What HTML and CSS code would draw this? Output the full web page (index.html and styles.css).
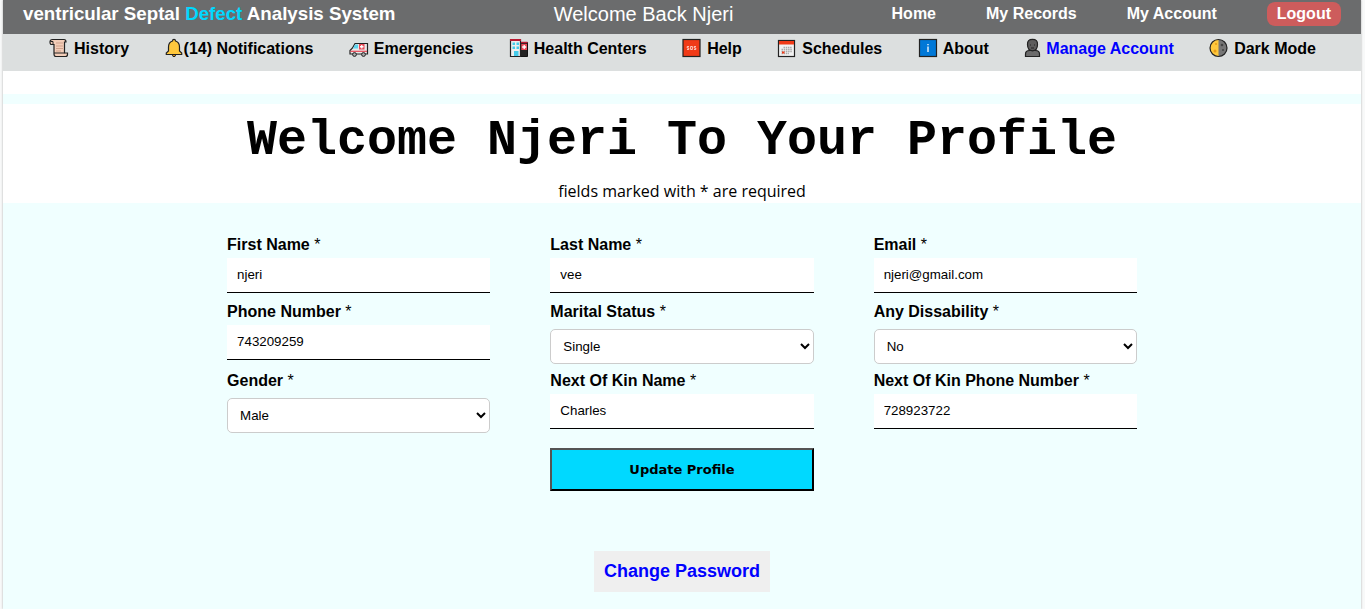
FILE: index.html
```html
<!DOCTYPE html>
<html lang="en">
<head>
<meta charset="utf-8">
<meta name="viewport" content="width=device-width, initial-scale=1">
<title>Manage Account</title>
<link rel="stylesheet" href="styles.css">
</head>
<body>
<div class="page">
  <header class="topbar">
    <h3 class="brand">ventricular Septal <span class="brand-accent">Defect</span> Analysis System</h3>
    <div class="greeting">Welcome Back Njeri</div>
    <nav class="top-links">
      <a href="#">Home</a>
      <a href="#">My Records</a>
      <a href="#">My Account</a>
      <a href="#" class="logout">Logout</a>
    </nav>
  </header>

  <nav class="menu">
    <a href="#" class="menu-item">
      <svg class="icon" viewBox="0 0 20 20"><path d="M4.500 1.500H15Q17 1.500 17 4H15.500V15H18.500V16.500Q18.500 18.500 16.500 18.500H7Q5 18.500 5 16V6.500H2.500Q1 6.500 1 4Q1 1.500 3.500 1.500Z" fill="#f3cdb8" stroke="#222" stroke-width="1.200"/><path d="M1.500 3.500H4V6.500M5 15H15.500" stroke="#222" fill="none"/><path d="M7 5H14M7 8H14M7 10.500H14M7 13H12" stroke="#cfa18c"/></svg>
      <span>History</span>
    </a>
    <a href="#" class="menu-item menu-item-tight">
      <svg class="icon" viewBox="0 0 18 20"><path d="M7.500 16H10.500V17Q10.500 18.700 9 18.700T7.500 17Z" fill="#e79b16" stroke="#222"/><path d="M9 1.400Q10.500 1.400 10.500 3Q14.500 4.200 14.500 9V13L16.700 15V16.500H1.300V15L3.500 13V9Q3.500 4.200 7.500 3Q7.500 1.400 9 1.400Z" fill="#ffc83d" stroke="#222" stroke-width="1.200"/></svg>
      <span>(14) Notifications</span>
    </a>
    <a href="#" class="menu-item">
      <svg class="icon" viewBox="0 0 20 20"><path d="M6 5.500H18.500V16H1V12.500L3.500 10Z" fill="#e8e8e8" stroke="#222" stroke-width="1.200"/><path d="M6 6.500H9V10.500H4Z" fill="#5fd4ef"/><path d="M10 6H15.500V11.500H10Z" fill="#e94856"/><path d="M12.750 7V10.500M11 8.750H14.500" stroke="#fff" stroke-width="1.300"/><path d="M1.500 13.300H18" stroke="#e94856" stroke-width="1.200"/><circle cx="5.500" cy="16.500" r="1.900" fill="#aaa" stroke="#222"/><circle cx="14.500" cy="16.500" r="1.900" fill="#aaa" stroke="#222"/></svg>
      <span>Emergencies</span>
    </a>
    <a href="#" class="menu-item">
      <svg class="icon" viewBox="0 0 20 20"><path d="M11.500 4.500H18.500V18.500H11.500Z" fill="#222" stroke="#111"/><path d="M1.500 1.500H11.500V18.500H1.500Z" fill="#eee" stroke="#222" stroke-width="1.200"/><path d="M1 2H12" stroke="#b81830" stroke-width="2"/><path d="M12 4.500H18.500" stroke="#b81830" stroke-width="1.500"/><path d="M3.500 4.500H6V7H3.500ZM7.500 4.500H10V7H7.500ZM3.500 8.500H6V11H3.500ZM7.500 8.500H10V11H7.500ZM5 13H9.500V18H5Z" fill="#45cbea"/><path d="M12.300 6H18V12H12.300Z" fill="#e94856"/><path d="M15.200 7V11M13.200 9H17.200" stroke="#fff" stroke-width="1.300"/></svg>
      <span>Health Centers</span>
    </a>
    <a href="#" class="menu-item">
      <svg class="icon" viewBox="0 0 20 20"><rect x="1" y="1.500" width="17" height="17" fill="#f03a17" stroke="#222" stroke-width="1.200"/><path d="M7 8.500H5.200V10H6.800V11.500H5M8.600 8.500H10.400V11.500H8.600ZM14 8.500H12.200V10H13.800V11.500H12" fill="none" stroke="#fff" stroke-width=".7"/></svg>
      <span>Help</span>
    </a>
    <a href="#" class="menu-item">
      <svg class="icon" viewBox="0 0 20 20"><rect x="1.500" y="2.500" width="16" height="16" fill="#f2f2f2" stroke="#222" stroke-width="1.200"/><path d="M2 3H17V6.500H2Z" fill="#f03a17"/><path d="M6.500 9.500H15M4.500 11.500H15M4.500 13.500H15M4.500 15.500H12" stroke="#aaa" stroke-width="1.300" stroke-dasharray="1.500 .7"/><path d="M5 13.500H7.500V15.500H5Z" fill="#f03a17"/></svg>
      <span>Schedules</span>
    </a>
    <a href="#" class="menu-item">
      <svg class="icon" viewBox="0 0 20 20"><rect x="1.500" y="1.500" width="17" height="17" fill="#0078d7" stroke="#222" stroke-width="1.200"/><path d="M10 6V7.300M10 8.500V14" stroke="#fff" stroke-width="1.300"/></svg>
      <span>About</span>
    </a>
    <a href="#" class="menu-item menu-item-active">
      <svg class="icon" viewBox="0 0 18 20"><path d="M1.500 18.500V16Q1.500 12.500 5.500 12.500H11.500Q15.500 12.500 15.500 16V18.500Z" fill="#6b6b6b" stroke="#222" stroke-width="1.200"/><path d="M8.500 1.400Q13.800 1.400 13.500 6.500Q13.500 12.500 8.500 12.800Q3.500 12.500 3.500 6.500Q3.200 1.400 8.500 1.400Z" fill="#5d5d5d" stroke="#222" stroke-width="1.200"/><path d="M6 7H7M10 7H11M7 10H10" stroke="#222"/></svg>
      <span>Manage Account</span>
    </a>
    <a href="#" class="menu-item">
      <svg class="icon" viewBox="0 0 20 20"><circle cx="9.500" cy="10" r="8.500" fill="#767676"/><path d="M9.500 1.500A8.500 8.500 0 0 0 9.500 18.500Z" fill="#ffc83d"/><circle cx="6" cy="13" r="1.500" fill="#e79b16"/><circle cx="7" cy="6" r="1" fill="#e79b16"/><circle cx="13" cy="7" r="1.300" fill="#444"/><circle cx="14" cy="12" r="1" fill="#444"/><circle cx="9.500" cy="10" r="8.500" fill="none" stroke="#222" stroke-width="1.200"/></svg>
      <span>Dark Mode</span>
    </a>
  </nav>

  <main class="content">
    <section class="intro">
      <h1 class="title">Welcome Njeri To Your Profile</h1>
      <p class="note">fields marked with * are required</p>
    </section>

    <form class="profile-form">
      <div class="field">
        <label for="first-name">First Name <span class="star">*</span></label>
        <input id="first-name" type="text" value="njeri">
      </div>
      <div class="field">
        <label for="last-name">Last Name <span class="star">*</span></label>
        <input id="last-name" type="text" value="vee">
      </div>
      <div class="field">
        <label for="email">Email <span class="star">*</span></label>
        <input id="email" type="email" value="njeri@gmail.com">
      </div>
      <div class="field">
        <label for="phone">Phone Number <span class="star">*</span></label>
        <input id="phone" type="text" value="743209259">
      </div>
      <div class="field">
        <label for="marital">Marital Status <span class="star">*</span></label>
        <select id="marital"><option>Single</option><option>Married</option></select>
      </div>
      <div class="field">
        <label for="disability">Any Dissability <span class="star">*</span></label>
        <select id="disability"><option>No</option><option>Yes</option></select>
      </div>
      <div class="field">
        <label for="gender">Gender <span class="star">*</span></label>
        <select id="gender"><option>Male</option><option>Female</option></select>
      </div>
      <div class="field">
        <label for="kin-name">Next Of Kin Name <span class="star">*</span></label>
        <input id="kin-name" type="text" value="Charles">
      </div>
      <div class="field">
        <label for="kin-phone">Next Of Kin Phone Number <span class="star">*</span></label>
        <input id="kin-phone" type="text" value="728923722">
      </div>
      <button type="submit" class="update">Update Profile</button>
    </form>

    <a href="#" class="change-password">Change Password</a>
  </main>
</div>
</body>
</html>
```

FILE: styles.css
```css
* {
  box-sizing: border-box;
}

body {
  margin: 0;
  background: #f8f9f9;
  font-family: Arial, "Liberation Sans", sans-serif;
  font-size: 16px;
  color: #000;
}

a {
  color: inherit;
  text-decoration: none;
}

.page {
  display: flex;
  flex-direction: column;
  min-height: 100vh;
  margin: 0 4px 0 3px;
  background: #fff;
  box-shadow: 0 0 2px #aaa;
}

.topbar {
  display: flex;
  justify-content: space-between;
  align-items: center;
  padding: 2px 20px 8px;
  background: #6b6c6d;
  color: #fff;
}

.brand {
  margin: 0;
}

.brand-accent {
  color: #00d9ff;
}

.greeting {
  font-size: 20px;
}

.top-links {
  display: flex;
  align-items: center;
  gap: 50px;
  font-weight: bold;
}

.logout {
  padding: 0 10px;
  border-radius: 8px;
  background: #cd5c5c;
  line-height: 24px;
}

.top-links a {
  white-space: nowrap;
}

.menu {
  display: flex;
  justify-content: space-between;
  padding: 4px 45px 11px 46px;
  background: #dcdfdf;
  font-weight: bold;
  line-height: 22px;
}

.menu-item {
  display: flex;
  gap: 5px;
  white-space: nowrap;
}

.menu-item-tight {
  gap: 1px;
}

.menu-item-active {
  gap: 4px;
  color: #00f;
}

.icon {
  width: 20px;
  height: 20px;
}

.menu-item-tight .icon,
.menu-item-active .icon {
  width: 18px;
}

.content {
  display: flex;
  flex: 1;
  flex-direction: column;
  align-items: center;
  margin-top: 23px;
  padding: 10px 0 16px;
  background: #f0ffff;
}

.intro {
  align-self: stretch;
  padding: 9px 0 0;
  background: #fff;
  text-align: center;
}

.title {
  margin: 0;
  font-family: "Courier New", "Liberation Mono", monospace;
  font-size: 50px;
  line-height: 56px;
}

.note {
  margin: 10px 0 0;
  font-family: "Comic Sans MS", "Open Sans", sans-serif;
  line-height: 24px;
}

.profile-form {
  display: grid;
  grid-template-columns: repeat(3, 1fr);
  gap: 7px 60px;
  width: 67%;
  margin-top: 32px;
}

.field {
  display: flex;
  flex-direction: column;
}

.field label {
  font-weight: bold;
  line-height: 20px;
}

.star {
  font-weight: normal;
}

.field input,
.field select {
  width: 100%;
  height: 35px;
  background: #fff;
  color: #000;
  font-family: inherit;
}

.field input {
  margin: 3px 0 2px;
  padding: 0 10px 2px;
  border: 0;
  border-bottom: 1px solid #000;
}

.field select {
  margin-top: 7px;
  padding: 0 8px;
  border: 1px solid #ccc;
  border-radius: 5px;
}

.update {
  grid-column: 2;
  height: 43px;
  margin-top: 8px;
  border: 2px outset #000;
  background: #00d9ff;
  color: #000;
  font-family: "Arial Black", "DejaVu Sans", sans-serif;
  font-size: 13px;
  font-weight: 900;
}

.change-password {
  margin-top: 60px;
  padding: 10px;
  background: #efefef;
  color: #00f;
  font-size: 18px;
  font-weight: bold;
  line-height: 21px;
}
```
